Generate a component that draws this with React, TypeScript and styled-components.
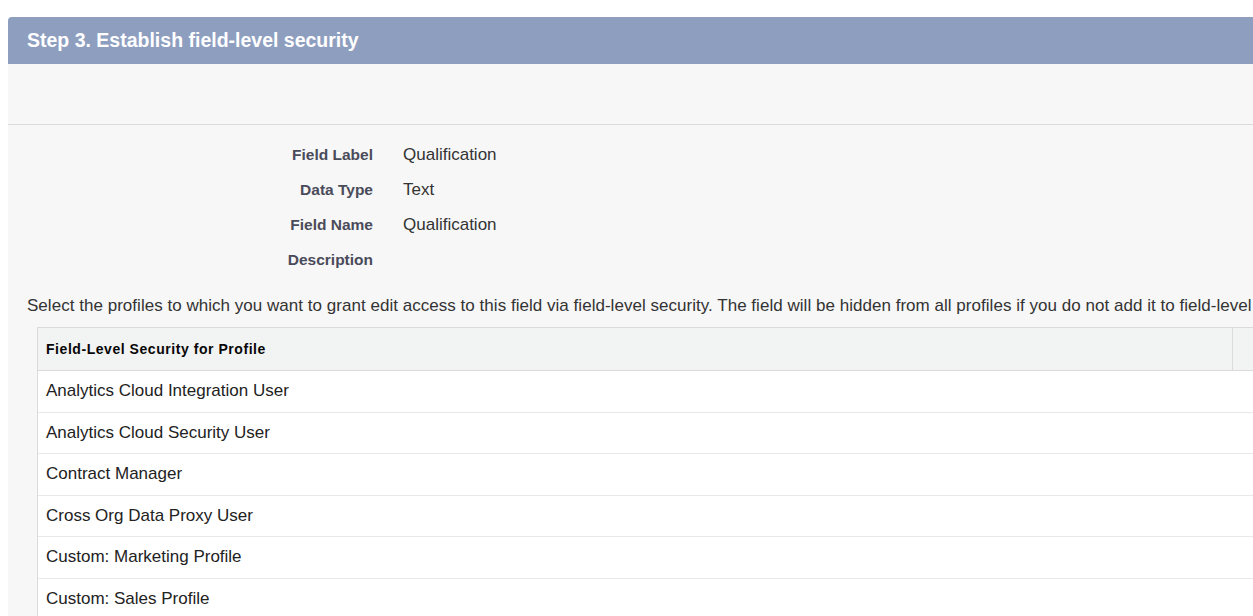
import React from "react";
import styled, { createGlobalStyle } from "styled-components";

const GlobalStyle = createGlobalStyle`
  html, body { overflow: hidden; }
  body {
    margin: 0;
    padding: 17px 0 0 8px;
    background: #ffffff;
    font-family: Arial, "Liberation Sans", sans-serif;
  }
`;

const Panel = styled.section`
  width: 1300px;
  background: #f7f7f7;
  border-radius: 4px 4px 0 0;
  overflow: hidden;
`;

const PanelHeader = styled.header`
  height: 47px;
  display: flex;
  align-items: center;
  padding-left: 19px;
  background: #8e9ebf;
  color: #ffffff;
  font-size: 19.5px;
  font-weight: bold;
`;

const Spacer = styled.div`
  height: 60px;
  border-bottom: 1px solid #dadada;
`;

const Details = styled.dl`
  margin: 0;
  padding: 12px 0 0 0;
  display: grid;
  grid-template-columns: 365px 1fr;
  column-gap: 30px;
  grid-auto-rows: 35px;
  align-items: center;
`;

const Label = styled.dt`
  text-align: right;
  font-size: 15.5px;
  font-weight: bold;
  color: #4a4b5a;
`;

const Value = styled.dd`
  margin: 0;
  font-size: 17px;
  color: #333333;
`;

const Intro = styled.p`
  margin: 19px 0 11px 19px;
  font-size: 17px;
  line-height: 20px;
  letter-spacing: 0.03px;
  color: #333333;
  white-space: nowrap;
`;

const Table = styled.div`
  margin-left: 29px;
  border-left: 1px solid #dddbda;
  border-top: 1px solid #dddbda;
  background: #ffffff;
`;

const HeadRow = styled.div`
  display: grid;
  grid-template-columns: 1195px 1fr;
  height: 42px;
  background: #f2f3f3;
  border-bottom: 1px solid #dddbda;
`;

const HeadCell = styled.div<{ $divider?: boolean }>`
  display: flex;
  align-items: center;
  padding-left: 8px;
  font-size: 14px;
  letter-spacing: 0.55px;
  font-weight: bold;
  color: #080707;
  border-right: ${(p) => (p.$divider ? "1px solid #dddbda" : "none")};
`;

const Row = styled.div`
  height: 41.5px;
  box-sizing: border-box;
  display: flex;
  align-items: center;
  padding-left: 8px;
  border-bottom: 1px solid #e8e8e8;
  font-size: 17px;
  color: #222222;
`;

const details: [string, string][] = [
  ["Field Label", "Qualification"],
  ["Data Type", "Text"],
  ["Field Name", "Qualification"],
  ["Description", ""],
];

const profiles = [
  "Analytics Cloud Integration User",
  "Analytics Cloud Security User",
  "Contract Manager",
  "Cross Org Data Proxy User",
  "Custom: Marketing Profile",
  "Custom: Sales Profile",
  "Custom: Support Profile",
];

export default function App() {
  return (
    <>
      <GlobalStyle />
      <Panel>
        <PanelHeader>Step 3. Establish field-level security</PanelHeader>
        <Spacer />
        <Details>
          {details.map(([k, v]) => (
            <React.Fragment key={k}>
              <Label>{k}</Label>
              <Value>{v}</Value>
            </React.Fragment>
          ))}
        </Details>
        <Intro>
          Select the profiles to which you want to grant edit access to this field via field-level security. The field will be hidden from all profiles if you do not add it to field-level security.
        </Intro>
        <Table>
          <HeadRow>
            <HeadCell $divider>Field-Level Security for Profile</HeadCell>
            <HeadCell />
          </HeadRow>
          {profiles.map((p) => (
            <Row key={p}>{p}</Row>
          ))}
        </Table>
      </Panel>
    </>
  );
}
